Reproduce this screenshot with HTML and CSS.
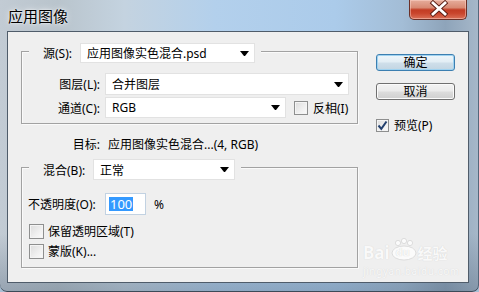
FILE: index.html
```html
<!DOCTYPE html>
<html lang="zh-CN">
<head>
    <meta charset="UTF-8">
    <meta name="viewport" content="width=device-width, initial-scale=1.0">
    <title>应用图像</title>
    <link rel="stylesheet" href="styles.css">
</head>
<body>
    <div class="window">
        <div class="titlebar">
            <span class="title">应用图像</span>
            <div class="closeBtn">
                <svg width="58" height="20" viewBox="0 0 58 20">
                    <path d="M23 4 L35 15 M35 4 L23 15" stroke="#5a1d14" stroke-width="4.6" stroke-linecap="square"/>
                    <path d="M23 4 L35 15 M35 4 L23 15" stroke="#ffffff" stroke-width="2.8" stroke-linecap="square"/>
                </svg>
            </div>
        </div>

        <div class="client">
            <div class="mainCol">
                <div class="group groupSource">
                    <div class="groupHead">
                        <span class="legend legendSource">源(S):</span>
                        <div class="select selectSource">应用图像实色混合.psd<span class="arrow"></span></div>
                    </div>
                    <div class="row rowLayer">
                        <span class="label">图层(L):</span>
                        <div class="select selectLayer">合并图层<span class="arrow"></span></div>
                    </div>
                    <div class="row rowChannel">
                        <span class="label">通道(C):</span>
                        <div class="select selectChannel">RGB<span class="arrow"></span></div>
                        <div class="check checkInvert"><span class="box"></span>反相(I)</div>
                    </div>
                </div>

                <div class="target">
                    <span class="label">目标:</span>
                    <span class="targetValue">应用图像实色混合...(4, RGB)</span>
                </div>

                <div class="group groupBlend">
                    <div class="groupHead">
                        <span class="legend legendBlend">混合(B):</span>
                        <div class="select selectBlend">正常<span class="arrow"></span></div>
                    </div>
                    <div class="opacityRow">
                        <span class="opacityLabel">不透明度(O):</span>
                        <div class="numInput"><span class="selected">100</span></div>
                        <span class="pct">%</span>
                    </div>
                    <div class="check checkRow checkKeep"><span class="box"></span>保留透明区域(T)</div>
                    <div class="check checkRow"><span class="box"></span>蒙版(K)...</div>
                </div>
            </div>

            <div class="sideCol">
                <button class="btn btnDefault">确定</button>
                <button class="btn btnCancel">取消</button>
                <div class="check checkPreview">
                    <span class="box">
                        <svg width="11" height="11" viewBox="0 0 11 11"><path d="M1.5 5.5 L4.3 8.8 L9.5 1.5" fill="none" stroke="#23406e" stroke-width="2"/></svg>
                    </span>预览(P)
                </div>
            </div>

            <!-- watermark sits over the dialog -->
            <div class="watermark">
                <div class="wmTop">
                    <span class="wmBai">Bai</span>
                    <span class="wmPaw">
                        <svg width="28" height="24" viewBox="0 0 28 24">
                            <circle cx="8" cy="5" r="2.6" fill="#fbfbfb" stroke="#d6d6d6" stroke-width="0.8"/>
                            <circle cx="14" cy="3" r="2.6" fill="#fbfbfb" stroke="#d6d6d6" stroke-width="0.8"/>
                            <circle cx="20" cy="5" r="2.6" fill="#fbfbfb" stroke="#d6d6d6" stroke-width="0.8"/>
                            <ellipse cx="14" cy="15" rx="12" ry="7" fill="#fbfbfb" stroke="#d6d6d6" stroke-width="0.8"/>
                        </svg>
                        <span class="wmDu">du</span>
                    </span>
                    <span class="wmJy">经验</span>
                </div>
                <div class="wmUrl">jingyan.baidu.com</div>
            </div>
        </div>
    </div>
</body>
</html>
```

FILE: styles.css
```css
* {
    box-sizing: border-box;
    margin: 0;
    padding: 0;
}

body {
    background-color: #a9bfd4;
    font-family: "Noto Sans", "Noto Sans CJK SC", sans-serif;
    font-size: 12px;
    color: #000;
}

.window {
    width: 479px;
    height: 292px;
    display: flex;
    flex-direction: column;
    border-radius: 0 0 7px 7px;
    background:
        linear-gradient(to bottom, rgba(255,255,255,0) 0%, rgba(255,255,255,0) 80%, rgba(70,90,112,0.35) 100%),
        linear-gradient(to right, #c2cbd4 0%, #b9c4cc 12%, #c4d3e0 26%, #b3d0ec 45%, #abcbea 70%, #a3bdd6 84%, #8ea4ba 93%, #a7b8c9 100%);
    box-shadow: inset 0 -1px #3c4a58, inset -1px 0 #55677a;
}

.titlebar {
    height: 31px;
    display: flex;
    justify-content: space-between;
    align-items: flex-start;
    padding-left: 8px;
}

.title {
    margin-top: 7px;
    font-size: 15px;
    line-height: 18px;
    text-shadow: 0 0 6px rgba(255,255,255,0.9), 0 0 2px rgba(255,255,255,0.9);
}

.closeBtn {
    width: 58px;
    height: 20px;
    margin-right: 12px;
    border: 1px solid #6b3027;
    border-top: none;
    border-radius: 0 0 5px 5px;
    background: linear-gradient(to bottom, #e6ad9c 0%, #d88a74 40%, #c23c24 52%, #c9452c 70%, #da7058 100%);
    box-shadow: inset 0 0 0 1px rgba(255,220,210,0.45);
    overflow: hidden;
}

.closeBtn svg {
    display: block;
    margin-top: -1px;
}

.client {
    position: relative;
    display: flex;
    height: 252px;
    margin: 0 10px 0 7px;
    border: 1px solid #4f5c6a;
    background-color: #efefef;
}

/* left column with the two group boxes */
.mainCol {
    display: flex;
    flex-direction: column;
    width: 337px;
    margin: 19px 0 0 13px;
}

.group {
    display: flex;
    flex-direction: column;
    border: 1px solid #a2a2a2;
    box-shadow: 1px 1px 0 #fafafa, inset 1px 1px 0 #fafafa;
}

.groupSource {
    height: 73px;
}

.groupBlend {
    height: 101px;
}

.groupHead {
    display: flex;
    align-items: center;
    align-self: flex-start;
    margin: -9px 0 0 7px;
    padding: 0 6px 0 14px;
    background-color: #efefef;
}

.legendSource {
    width: 37px;
}

.legendBlend {
    width: 50px;
}

.select {
    display: flex;
    align-items: center;
    padding-left: 6px;
    background-color: #fff;
    border: 1px solid #e2e2e2;
    white-space: nowrap;
}

.arrow {
    width: 1px;
    height: 0;
    margin-left: auto;
    margin-right: 5px;
    border-left: 4px solid transparent;
    border-right: 4px solid transparent;
    border-top: 5px solid #000;
    box-sizing: content-box;
}

.selectSource {
    width: 175px;
    height: 20px;
}

.selectBlend {
    width: 142px;
    height: 21px;
}

.row {
    display: flex;
    align-items: center;
}

.rowLayer {
    margin-top: 10px;
    height: 22px;
}

.rowChannel {
    margin-top: 2px;
    height: 21px;
}

.label {
    width: 78px;
    margin-right: 5px;
    text-align: right;
}

.selectLayer {
    width: 244px;
    height: 22px;
}

.selectChannel {
    width: 181px;
    height: 21px;
}

.check {
    display: flex;
    align-items: center;
}

.box {
    display: flex;
    align-items: center;
    justify-content: center;
    width: 14px;
    height: 14px;
    margin-right: 5px;
    border: 1px solid #8e8f8f;
    background: linear-gradient(135deg, #dcdcdc 0%, #f0f0f0 60%, #fbfbfb 100%);
    box-shadow: inset 0 0 0 1px #f4f4f4;
}

.checkInvert {
    margin-left: 8px;
}

.target {
    display: flex;
    align-items: center;
    height: 16px;
    margin: 12px 0 15px;
}

.target .label {
    width: 79px;
    margin-right: 8px;
}

.opacityRow {
    display: flex;
    align-items: center;
    height: 22px;
    margin-top: 13px;
    padding-left: 6px;
}

.opacityLabel {
    width: 77px;
}

.numInput {
    display: flex;
    align-items: center;
    width: 41px;
    height: 22px;
    padding-left: 3px;
    background-color: #fff;
    border: 1px solid #c2d2e2;
}

.selected {
    height: 14px;
    padding: 0 1px;
    font-size: 13px;
    line-height: 14px;
    color: #fff;
    background-color: #3399ff;
}

.pct {
    margin-left: 8px;
}

.checkRow {
    height: 20px;
    padding-left: 7px;
}

.checkKeep {
    margin-top: 6px;
}

.checkRow .box {
    width: 15px;
    height: 15px;
    margin-right: 4px;
}

/* right column: buttons */
.sideCol {
    display: flex;
    flex-direction: column;
    width: 79px;
    margin: 22px 0 0 18px;
}

.btn {
    width: 79px;
    height: 17px;
    font-family: "Noto Sans", "Noto Sans CJK SC", sans-serif;
    font-size: 12px;
    line-height: 15px;
    color: #000;
    border: 1px solid #707070;
    border-radius: 3px;
    background: linear-gradient(to bottom, #f3f3f3 0%, #ebebeb 48%, #dddddd 52%, #cfcfcf 100%);
    box-shadow: inset 0 0 0 1px #fbfbfb;
}

.btnDefault {
    border-color: #3c7fb1;
    background: linear-gradient(to bottom, #eef6fb 0%, #e2edf4 48%, #cfdfea 52%, #c2d5e2 100%);
    box-shadow: inset 0 0 0 1px #9fd2f0;
}

.btnCancel {
    margin-top: 12px;
}

.checkPreview {
    margin-top: 16px;
}

.checkPreview .box {
    width: 13px;
    height: 13px;
    margin-right: 5px;
}

/* baidu watermark */
.watermark {
    position: absolute;
    left: 355px;
    top: 206px;
    color: #f9f9f9;
    text-shadow: 0 0 1px #cdcdcd;
    pointer-events: none;
}

.wmTop {
    display: flex;
    align-items: flex-end;
}

.wmBai {
    font-size: 17px;
    line-height: 18px;
    font-weight: bold;
}

.wmPaw {
    position: relative;
    display: inline-block;
    width: 28px;
    height: 24px;
}

.wmPaw svg {
    display: block;
}

.wmDu {
    position: absolute;
    left: 6px;
    top: 8px;
    font-size: 11px;
    line-height: 12px;
    font-weight: bold;
    color: #f9f9f9;
}

.wmJy {
    font-size: 15px;
    line-height: 18px;
    font-weight: bold;
}

.wmUrl {
    margin-top: 3px;
    font-size: 10px;
    line-height: 12px;
    letter-spacing: 0.6px;
}
```
